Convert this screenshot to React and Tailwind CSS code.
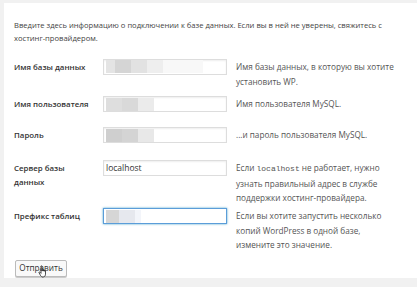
import React from 'react';

const rows = [
  {
    label: ['Имя базы данных'],
    height: 'h-[37px]',
    blur: [
      ['w-[9px]', 'bg-[#e4e4e4]'],
      ['w-[16px]', 'bg-[#d5d5d5]'],
      ['w-[16px]', 'bg-[#e2e2e2]'],
      ['w-[16px]', 'bg-[#eeeeee]'],
      ['w-[40px]', 'bg-[#f8f8f8]'],
    ],
    blurTop: '-mt-[2px]',
    desc: ['Имя базы данных, в которую вы хотите', 'установить WP.'],
  },
  {
    label: ['Имя пользователя'],
    height: 'h-[31px]',
    blur: [
      ['w-[16px]', 'bg-[#dedede]'],
      ['w-[16px]', 'bg-[#d9d9d9]'],
      ['w-[16px]', 'bg-[#ebebeb]'],
    ],
    desc: ['Имя пользователя MySQL.'],
  },
  {
    label: ['Пароль'],
    height: 'h-[33px]',
    blur: [
      ['w-[16px]', 'bg-[#cfcfcf]'],
      ['w-[16px]', 'bg-[#d4d4d4]'],
      ['w-[16px]', 'bg-[#e8e8e8]'],
    ],
    desc: ['...и пароль пользователя MySQL.'],
  },
  {
    label: ['Сервер базы', 'данных'],
    height: 'h-[48px]',
    value: 'localhost',
    desc: [
      <>
        Если <span className="font-['Liberation_Mono',monospace] text-[8px]">localhost</span> не работает, нужно
      </>,
      'узнать правильный адрес в службе',
      'поддержки хостинг-провайдера.',
    ],
  },
  {
    label: ['Префикс таблиц'],
    height: 'h-[52px]',
    focused: true,
    blur: [
      ['w-[13px]', 'bg-[#d6d6d6]'],
      ['w-[16px]', 'bg-[#e6e8ee]'],
      ['w-[6px]', 'bg-[#f3f5fa]'],
    ],
    desc: [
      'Если вы хотите запустить несколько',
      'копий WordPress в одной базе,',
      'измените это значение.',
    ],
  },
];

const Field = ({row}) => (
  <div
    className={`w-[124px] h-[16px] shrink-0 bg-white flex items-center px-[2px] ${
      row.focused
        ? 'border border-[#5b9dd9] shadow-[0_0_2px_rgba(30,140,190,0.8)]'
        : 'border border-[#dddddd] shadow-[inset_0_1px_2px_rgba(0,0,0,0.07)]'
    }`}>
    {row.value && <span className="text-[8.5px] text-[#333] leading-none">{row.value}</span>}
    {row.blur && (
      <div className={`flex h-[13px] ${row.blurTop || ''}`}>
        {row.blur.map(([w, c], i) => (
          <div key={i} className={`${w} ${c} h-full`} />
        ))}
      </div>
    )}
  </div>
);

const Row = ({row}) => (
  <div className={`flex ${row.height}`}>
    <div className="w-[89px] shrink-0 pt-[1px] text-[7.9px] font-semibold text-[#333] leading-[14px]">
      {row.label.map((l, i) => (
        <div key={i}>{l}</div>
      ))}
    </div>
    <Field row={row} />
    <div className="ml-[9px] pt-[1px] text-[#555] leading-[14.5px]">
      {row.desc.map((d, i) => (
        <div key={i} className="whitespace-nowrap">{d}</div>
      ))}
    </div>
  </div>
);

const Pointer = () => (
  <svg className="absolute left-[22px] top-[4px]" width="10" height="13" viewBox="0 0 10 13">
    <path
      d="M3 1.2c0-.6.9-.6.9 0V6h.3V4.6c0-.6.9-.6.9 0V6h.3V5c0-.6.9-.6.9 0V6.2h.3v-.6c0-.6.9-.6.9 0v3.6c0 1.6-1 2.8-2.6 2.8H5c-1.3 0-2-.7-2.6-1.7L1 7.6c-.3-.5.4-1 .8-.5L3 8.4z"
      fill="#fff"
      stroke="#222"
      strokeWidth="0.8"
    />
  </svg>
);

const App = () => (
  <div className="w-[417px] h-[287px] bg-[#f1f1f1] pt-[3px] pl-[4px] overflow-hidden font-['Open_Sans',sans-serif] text-[8.2px] text-[#444]">
    <div className="bg-white h-[275px] pl-[10px] pt-[16px]">
      <p className="text-[7.6px] leading-[13px] mb-[14px] whitespace-nowrap">
        Введите здесь информацию о подключении к базе данных. Если вы в ней не уверены, свяжитесь с
        <br />
        хостинг-провайдером.
      </p>
      {rows.map((row, i) => (
        <Row key={i} row={row} />
      ))}
      <div>
        <button className="relative w-[52px] h-[17px] ml-[1px] border border-[#bbbbbb] bg-[#f9f9f9] rounded-[2px] text-[8.2px] text-[#333] leading-none shadow-[0_1px_0_#ccc]">
          Отправить
          <Pointer />
        </button>
      </div>
    </div>
  </div>
);

export default App;
